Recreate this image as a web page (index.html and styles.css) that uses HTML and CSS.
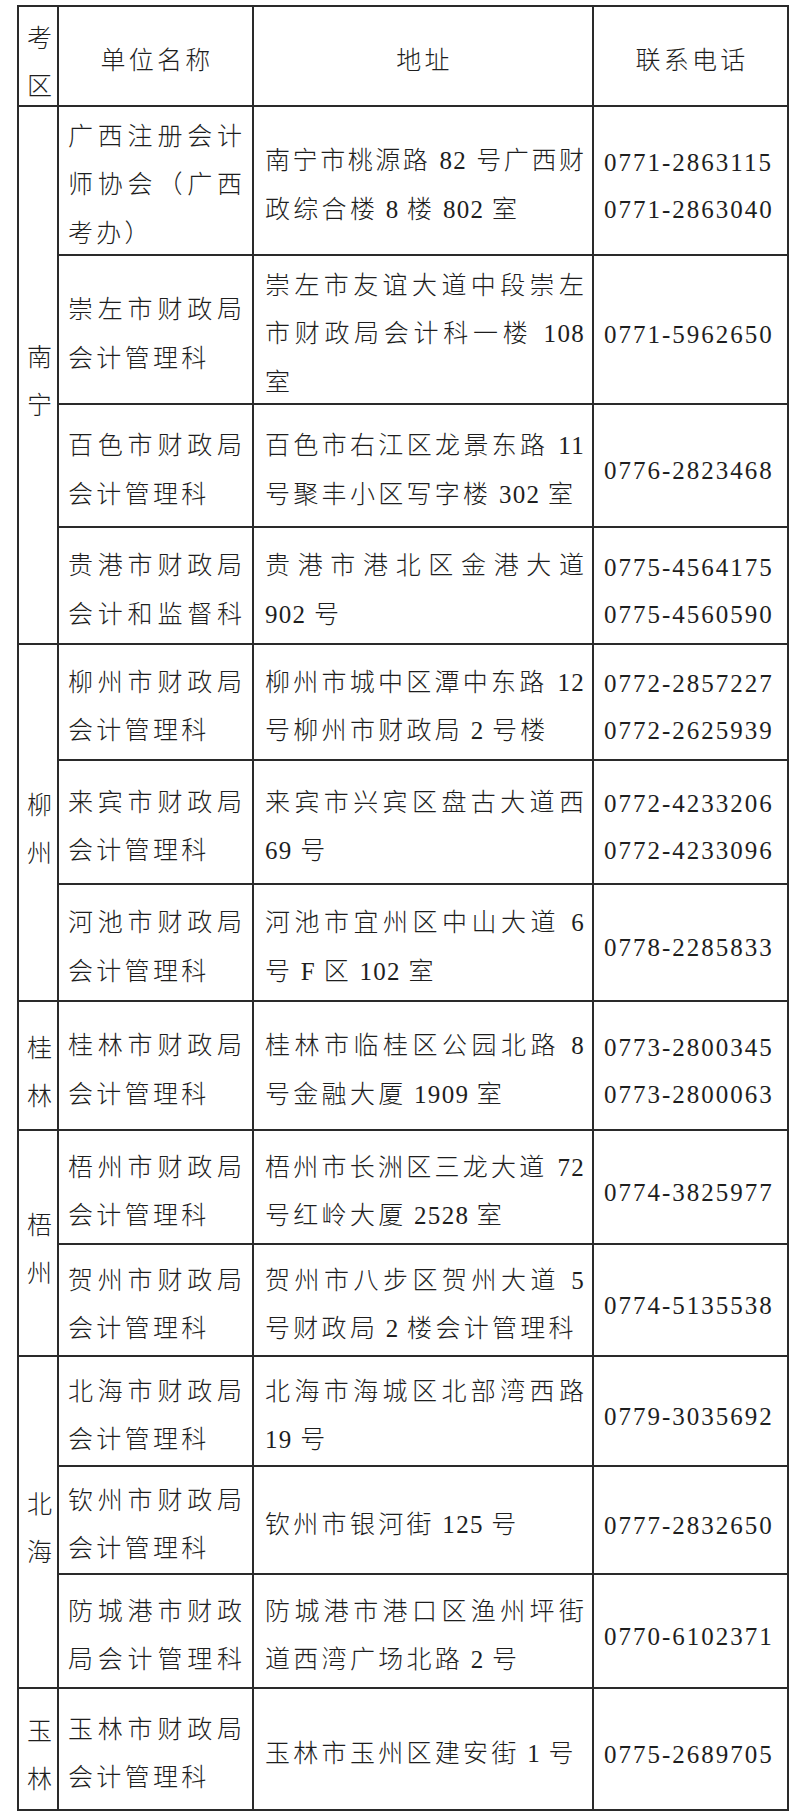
FILE: index.html
```html
<!DOCTYPE html>
<html lang="zh-CN">
<head>
<meta charset="utf-8">
<title>考区联系方式</title>
<link rel="stylesheet" href="styles.css">
</head>
<body>
<div class="sheet">
  <div class="cell reg">考<br>区</div>
  <div class="cell hd"><div class="ln">单位名称</div></div>
  <div class="cell hd"><div class="ln">地址</div></div>
  <div class="cell hd"><div class="ln">联系电话</div></div>

  <div class="cell reg s4">南<br>宁</div>
  <div class="cell nm"><div class="ln j">广西注册会计</div><div class="ln j">师协会（广西</div><div class="ln">考办）</div></div>
  <div class="cell addr"><div class="ln j">南宁市桃源路<span class="n"> 82 </span>号广西财</div><div class="ln">政综合楼<span class="n"> 8 </span>楼<span class="n"> 802 </span>室</div></div>
  <div class="cell tel"><div>0771-2863115</div><div>0771-2863040</div></div>

  <div class="cell nm"><div class="ln j">崇左市财政局</div><div class="ln">会计管理科</div></div>
  <div class="cell addr"><div class="ln j">崇左市友谊大道中段崇左</div><div class="ln j">市财政局会计科一楼<span class="n"> 108</span></div><div class="ln">室</div></div>
  <div class="cell tel"><div>0771-5962650</div></div>

  <div class="cell nm"><div class="ln j">百色市财政局</div><div class="ln">会计管理科</div></div>
  <div class="cell addr"><div class="ln j">百色市右江区龙景东路<span class="n"> 11</span></div><div class="ln">号聚丰小区写字楼<span class="n"> 302 </span>室</div></div>
  <div class="cell tel"><div>0776-2823468</div></div>

  <div class="cell nm"><div class="ln j">贵港市财政局</div><div class="ln j">会计和监督科</div></div>
  <div class="cell addr"><div class="ln j">贵港市港北区金港大道</div><div class="ln"><span class="n">902 </span>号</div></div>
  <div class="cell tel"><div>0775-4564175</div><div>0775-4560590</div></div>

  <div class="cell reg s3">柳<br>州</div>
  <div class="cell nm"><div class="ln j">柳州市财政局</div><div class="ln">会计管理科</div></div>
  <div class="cell addr"><div class="ln j">柳州市城中区潭中东路<span class="n"> 12</span></div><div class="ln">号柳州市财政局<span class="n"> 2 </span>号楼</div></div>
  <div class="cell tel"><div>0772-2857227</div><div>0772-2625939</div></div>

  <div class="cell nm"><div class="ln j">来宾市财政局</div><div class="ln">会计管理科</div></div>
  <div class="cell addr"><div class="ln j">来宾市兴宾区盘古大道西</div><div class="ln"><span class="n">69 </span>号</div></div>
  <div class="cell tel"><div>0772-4233206</div><div>0772-4233096</div></div>

  <div class="cell nm"><div class="ln j">河池市财政局</div><div class="ln">会计管理科</div></div>
  <div class="cell addr"><div class="ln j">河池市宜州区中山大道<span class="n"> 6</span></div><div class="ln">号<span class="n"> F </span>区<span class="n"> 102 </span>室</div></div>
  <div class="cell tel"><div>0778-2285833</div></div>

  <div class="cell reg">桂<br>林</div>
  <div class="cell nm"><div class="ln j">桂林市财政局</div><div class="ln">会计管理科</div></div>
  <div class="cell addr"><div class="ln j">桂林市临桂区公园北路<span class="n"> 8</span></div><div class="ln">号金融大厦<span class="n"> 1909 </span>室</div></div>
  <div class="cell tel"><div>0773-2800345</div><div>0773-2800063</div></div>

  <div class="cell reg s2">梧<br>州</div>
  <div class="cell nm"><div class="ln j">梧州市财政局</div><div class="ln">会计管理科</div></div>
  <div class="cell addr"><div class="ln j">梧州市长洲区三龙大道<span class="n"> 72</span></div><div class="ln">号红岭大厦<span class="n"> 2528 </span>室</div></div>
  <div class="cell tel"><div>0774-3825977</div></div>

  <div class="cell nm"><div class="ln j">贺州市财政局</div><div class="ln">会计管理科</div></div>
  <div class="cell addr"><div class="ln j">贺州市八步区贺州大道<span class="n"> 5</span></div><div class="ln">号财政局<span class="n"> 2 </span>楼会计管理科</div></div>
  <div class="cell tel"><div>0774-5135538</div></div>

  <div class="cell reg s3">北<br>海</div>
  <div class="cell nm"><div class="ln j">北海市财政局</div><div class="ln">会计管理科</div></div>
  <div class="cell addr"><div class="ln j">北海市海城区北部湾西路</div><div class="ln"><span class="n">19 </span>号</div></div>
  <div class="cell tel"><div>0779-3035692</div></div>

  <div class="cell nm"><div class="ln j">钦州市财政局</div><div class="ln">会计管理科</div></div>
  <div class="cell addr"><div class="ln">钦州市银河街<span class="n"> 125 </span>号</div></div>
  <div class="cell tel"><div>0777-2832650</div></div>

  <div class="cell nm"><div class="ln j">防城港市财政</div><div class="ln j">局会计管理科</div></div>
  <div class="cell addr"><div class="ln j">防城港市港口区渔州坪街</div><div class="ln">道西湾广场北路<span class="n"> 2 </span>号</div></div>
  <div class="cell tel"><div>0770-6102371</div></div>

  <div class="cell reg">玉<br>林</div>
  <div class="cell nm"><div class="ln j">玉林市财政局</div><div class="ln">会计管理科</div></div>
  <div class="cell addr"><div class="ln">玉林市玉州区建安街<span class="n"> 1 </span>号</div></div>
  <div class="cell tel"><div>0775-2689705</div></div>
</div>
</body>
</html>
```
FILE: styles.css
```css
html, body {
  margin: 0;
  padding: 0;
  background: #ffffff;
}

body {
  font-family: "Liberation Serif", "Noto Sans CJK SC", serif;
  font-size: 25px;
  font-weight: 300;
  color: #1e1e1e;
}

.sheet {
  margin: 5px 0 0 17px;
  width: 772px;
  box-sizing: border-box;
  display: grid;
  grid-template-columns: 38px 193px 338px 193px;
  grid-template-rows: 98px 147px 147px 121px 115px 114px 122px 115px 127px 112px 110px 108px 106px 112px 120px;
  gap: 2px;
  padding: 2px;
  background: #2a2a2a;
}

.cell {
  background: #ffffff;
  display: flex;
  flex-direction: column;
  justify-content: center;
  line-height: 48.5px;
  padding-top: 10px;
  min-width: 0;
  white-space: nowrap;
}

.ln {
  letter-spacing: 3.3px;
}

.ln.j {
  letter-spacing: 1px;
  text-align: justify;
  text-align-last: justify;
}

.n {
  letter-spacing: 1.3px;
}

.reg {
  align-items: center;
  text-align: center;
  line-height: 48px;
  padding-top: 14px;
  padding-left: 3px;
}

.s2 { grid-row: span 2; }
.s3 { grid-row: span 3; }
.s4 { grid-row: span 4; }

.hd {
  align-items: center;
  text-align: center;
  padding-left: 3px;
}

.nm {
  padding-left: 9px;
  padding-right: 9px;
}

.addr {
  padding-left: 11px;
  padding-right: 7px;
}

.tel {
  padding-left: 10px;
  line-height: 47px;
  letter-spacing: 2px;
}
```
